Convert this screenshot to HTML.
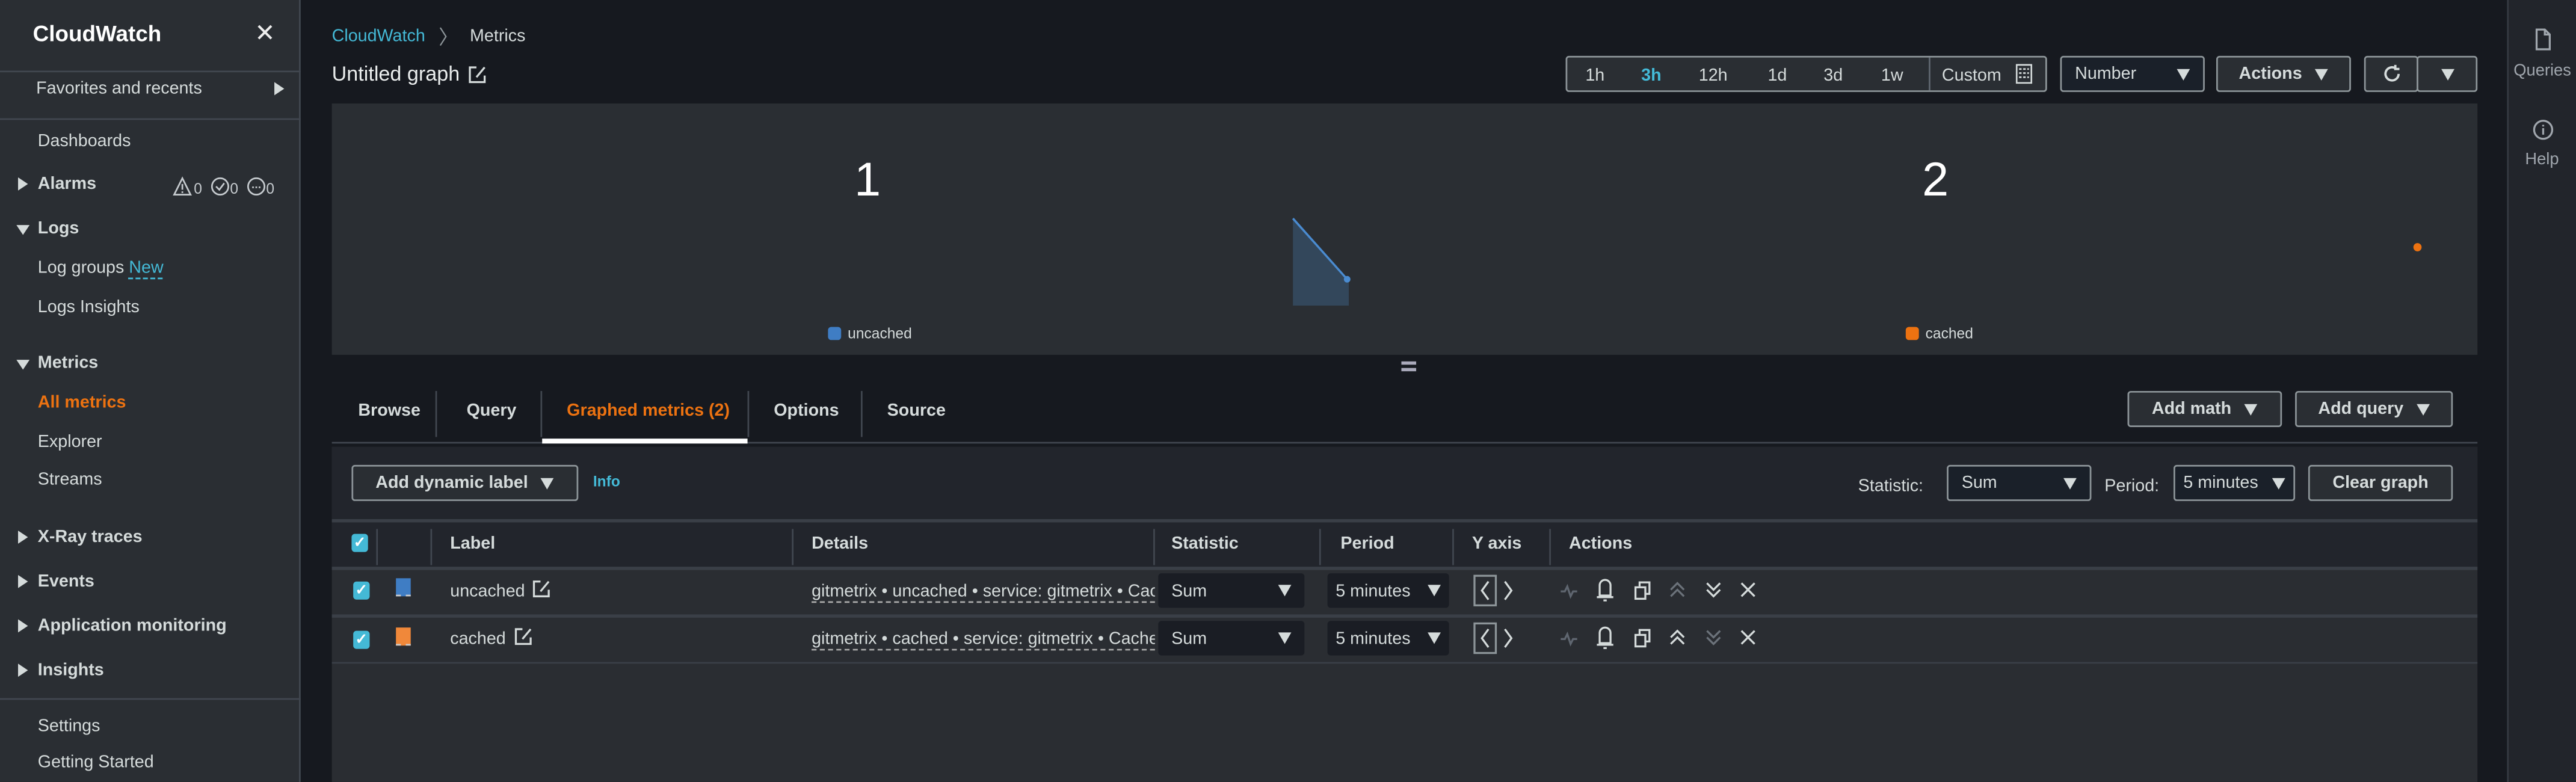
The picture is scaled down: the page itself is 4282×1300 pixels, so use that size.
<!DOCTYPE html>
<html><head><meta charset="utf-8"><style>
*{margin:0;padding:0;box-sizing:border-box}
html,body{width:4282px;height:1300px;overflow:hidden;background:#16191f}
#w{position:absolute;left:0;top:0;width:1568px;height:476px;transform:scale(2.7309);transform-origin:0 0;font-family:"Liberation Sans",sans-serif;font-size:10.5px;color:#d5dbdb;background:#16191f}
.a{position:absolute;white-space:nowrap}
.b{font-weight:bold}
.btn{position:absolute;border:1px solid #8d9599;border-radius:2px;background:#2a2e33;color:#d5dbdb;font-weight:bold;display:flex;align-items:center;justify-content:center;gap:8px}
.sel{position:absolute;border:1px solid #8d9599;border-radius:2px;background:#1a2029;color:#d5dbdb;display:flex;align-items:center;justify-content:space-between;padding:0 8px}
.tri{display:inline-block;width:0;height:0;border-left:4px solid transparent;border-right:4px solid transparent;border-top:7px solid #d5dbdb}
.rtri{position:absolute;width:0;height:0;border-top:4.5px solid transparent;border-bottom:4.5px solid transparent;border-left:6px solid #d5dbdb}
.dtri{position:absolute;width:0;height:0;border-left:4.5px solid transparent;border-right:4.5px solid transparent;border-top:6px solid #d5dbdb}
.vs{position:absolute;width:1px;background:#414750}
.hl{position:absolute;height:1px;background:#414750}
.cb{position:absolute;width:10px;height:11px;background:#44b9d6;border-radius:2px;color:#fff;font-size:9px;line-height:11px;text-align:center;font-weight:bold}
.isel{position:absolute;background:#1a1d24;border-radius:2px;display:flex;align-items:center;justify-content:space-between;padding:0 8px;color:#d5dbdb}
</style></head><body><div id="w">
<!-- sidebar -->
<div class="a" style="left:0;top:0;width:183px;height:476px;background:#2a2e33;border-right:1px solid #414750"></div>
<div class="a b" style="left:20px;top:13px;font-size:13.5px;color:#fff">CloudWatch</div>
<div class="a" style="left:155px;top:11px;font-size:15px;color:#eee">✕</div>
<div class="hl" style="left:0;top:43px;width:183px;background:#414750"></div>
<div class="a" style="left:22px;top:48px">Favorites and recents</div>
<div class="rtri" style="left:167px;top:50px"></div>
<div class="hl" style="left:0;top:72px;width:183px"></div>
<div class="a" style="left:23px;top:80px">Dashboards</div>
<div class="rtri" style="left:11px;top:108px"></div>
<div class="a b" style="left:23px;top:106px">Alarms</div>
<svg class="a" style="left:105px;top:107px" width="72" height="13" viewBox="0 0 72 13" fill="none" stroke="#c6cbcf" stroke-width="1"><path d="M6 1.5L1 11.5h10z M6 5v3.5 M6 9.5v1"/><text x="13" y="11" font-size="9" fill="#c6cbcf" stroke="none" font-family="Liberation Sans">0</text><circle cx="29" cy="6.5" r="5"/><path d="M26.5 6.5l2 2 3-4"/><text x="35" y="11" font-size="9" fill="#c6cbcf" stroke="none" font-family="Liberation Sans">0</text><circle cx="51" cy="6.5" r="5"/><path d="M48.5 7h1M50.5 7h1M52.5 7h1"/><text x="57" y="11" font-size="9" fill="#c6cbcf" stroke="none" font-family="Liberation Sans">0</text></svg>
<div class="dtri" style="left:10px;top:137px"></div>
<div class="a b" style="left:23px;top:133px">Logs</div>
<div class="a" style="left:23px;top:157px">Log groups <span style="color:#44b9d6;border-bottom:1px dashed #44b9d6">New</span></div>
<div class="a" style="left:23px;top:181px">Logs Insights</div>
<div class="dtri" style="left:10px;top:219px"></div>
<div class="a b" style="left:23px;top:215px">Metrics</div>
<div class="a b" style="left:23px;top:239px;color:#ec7211">All metrics</div>
<div class="a" style="left:23px;top:263px">Explorer</div>
<div class="a" style="left:23px;top:286px">Streams</div>
<div class="rtri" style="left:11px;top:323px"></div><div class="a b" style="left:23px;top:321px">X-Ray traces</div>
<div class="rtri" style="left:11px;top:350px"></div><div class="a b" style="left:23px;top:348px">Events</div>
<div class="rtri" style="left:11px;top:377px"></div><div class="a b" style="left:23px;top:375px">Application monitoring</div>
<div class="rtri" style="left:11px;top:404px"></div><div class="a b" style="left:23px;top:402px">Insights</div>
<div class="hl" style="left:0;top:425px;width:183px"></div>
<div class="a" style="left:23px;top:436px">Settings</div>
<div class="a" style="left:23px;top:458px">Getting Started</div>
<!-- right panel -->
<div class="a" style="left:1526px;top:0;width:42px;height:476px;background:#22252b;border-left:1px solid #353a42"></div>
<svg class="a" style="left:1542px;top:17px" width="12" height="14" viewBox="0 0 12 14" fill="none" stroke="#a0a6ad" stroke-width="1.2"><path d="M2 1h5l3 3v9H2z M7 1v3h3"/></svg>
<div class="a" style="left:1530px;top:38px;color:#a0a6ad;font-size:10px">Queries</div>
<svg class="a" style="left:1541px;top:72px" width="14" height="14" viewBox="0 0 14 14" fill="none" stroke="#a0a6ad" stroke-width="1.2"><circle cx="7" cy="7" r="5.5"/><path d="M7 6v4M7 4v1"/></svg>
<div class="a" style="left:1537px;top:92px;color:#a0a6ad;font-size:10px">Help</div>
<!-- header -->
<div class="a" style="left:202px;top:16px;color:#44b9d6">CloudWatch</div>
<div class="a" style="left:267px;top:14px;color:#8d9599;font-size:12px">〉</div>
<div class="a" style="left:286px;top:16px">Metrics</div>
<div class="a" style="left:202px;top:38px;font-size:12.5px;color:#eaeded">Untitled graph</div>
<svg class="a" style="left:285px;top:40px" width="11" height="11" viewBox="0 0 11 11" fill="none" stroke="#d5dbdb" stroke-width="1.2"><path d="M5 1H1v9h9V6 M5 7l5-6"/></svg>
<!-- time group -->
<div class="a" style="left:953px;top:34px;width:293px;height:22px;border:1px solid #8d9599;border-radius:2px;background:#2a2e33"></div>
<div class="a" style="left:965px;top:40px">1h</div>
<div class="a b" style="left:999px;top:40px;color:#44b9d6">3h</div>
<div class="a" style="left:1034px;top:40px">12h</div>
<div class="a" style="left:1076px;top:40px">1d</div>
<div class="a" style="left:1110px;top:40px">3d</div>
<div class="a" style="left:1145px;top:40px">1w</div>
<div class="vs" style="left:1174px;top:35px;height:20px;background:#5f6670"></div>
<div class="a" style="left:1182px;top:40px">Custom</div>
<svg class="a" style="left:1227px;top:39px" width="10" height="12" viewBox="0 0 10 12"><rect x="0.5" y="0.5" width="9" height="11" fill="none" stroke="#d5dbdb"/><path d="M2 3h6M2 5.5h6M2 8h6" stroke="#d5dbdb" stroke-dasharray="1.5 1"/></svg>
<div class="sel" style="left:1254px;top:34px;width:88px;height:22px"><span>Number</span><span class="tri"></span></div>
<div class="btn" style="left:1349px;top:34px;width:82px;height:22px">Actions <span class="tri"></span></div>
<div class="btn" style="left:1439px;top:34px;width:33px;height:22px"><svg width="12" height="12" viewBox="0 0 12 12" fill="none" stroke="#d5dbdb" stroke-width="1.4"><path d="M10 6a4 4 0 1 1-2-3.5M8 0.5v2.5h2.5"/></svg></div>
<div class="btn" style="left:1471px;top:34px;width:37px;height:22px"><span class="tri"></span></div>
<!-- graph -->
<div class="a" style="left:202px;top:63px;width:1306px;height:153px;background:#2a2e33"></div>
<div class="a" style="left:520px;top:94px;font-size:29px;color:#fff">1</div>
<div class="a" style="left:1170px;top:94px;font-size:29px;color:#fff">2</div>
<svg class="a" style="left:780px;top:128px" width="50" height="62"><path d="M7 5L41 43V58H7z" fill="#33475b"/><path d="M7 5L40 42" stroke="#4a8bd0" stroke-width="1.3"/><circle cx="40" cy="42" r="2" fill="#4a8bd0"/></svg>
<div class="a" style="left:1469px;top:148px;width:5px;height:5px;border-radius:3px;background:#ec7211"></div>
<div class="a" style="left:504px;top:199px;width:8px;height:8px;border-radius:2px;background:#3f7dc4"></div>
<div class="a" style="left:516px;top:198px;font-size:9px">uncached</div>
<div class="a" style="left:1160px;top:199px;width:8px;height:8px;border-radius:2px;background:#ec7211"></div>
<div class="a" style="left:1172px;top:198px;font-size:9px">cached</div>
<div class="a" style="left:853px;top:220px;width:9px;height:2px;background:#aab"></div>
<div class="a" style="left:853px;top:224px;width:9px;height:2px;background:#aab"></div>
<!-- tabs -->
<div class="a b" style="left:218px;top:244px">Browse</div>
<div class="vs" style="left:265px;top:238px;height:28px"></div>
<div class="a b" style="left:284px;top:244px">Query</div>
<div class="vs" style="left:329px;top:238px;height:28px"></div>
<div class="a b" style="left:345px;top:244px;color:#ec7211">Graphed metrics (2)</div>
<div class="vs" style="left:455px;top:238px;height:28px"></div>
<div class="a b" style="left:471px;top:244px">Options</div>
<div class="vs" style="left:524px;top:238px;height:28px"></div>
<div class="a b" style="left:540px;top:244px">Source</div>
<div class="btn" style="left:1295px;top:238px;width:94px;height:22px">Add math <span class="tri"></span></div>
<div class="btn" style="left:1397px;top:238px;width:96px;height:22px">Add query <span class="tri"></span></div>
<div class="hl" style="left:202px;top:269px;width:1306px;background:#414750"></div>
<div class="a" style="left:330px;top:267px;width:125px;height:3px;background:#fff"></div>
<!-- lower panel -->
<div class="a" style="left:202px;top:272px;width:1306px;height:204px;background:#2a2d32"></div>
<div class="a" style="left:202px;top:272px;width:1306px;height:73px;background:#22252c"></div>
<div class="btn" style="left:214px;top:283px;width:138px;height:22px">Add dynamic label <span class="tri"></span></div>
<div class="a b" style="left:361px;top:288px;color:#44b9d6;font-size:9px">Info</div>
<div class="a" style="left:1131px;top:290px">Statistic:</div>
<div class="sel" style="left:1185px;top:283px;width:88px;height:22px"><span>Sum</span><span class="tri"></span></div>
<div class="a" style="left:1281px;top:290px">Period:</div>
<div class="sel" style="left:1323px;top:283px;width:74px;height:22px;padding:0 5px"><span>5 minutes</span><span class="tri"></span></div>
<div class="btn" style="left:1405px;top:283px;width:88px;height:22px">Clear graph</div>
<div class="hl" style="left:202px;top:316px;width:1306px;height:1.5px;background:#3a3f47"></div>
<div class="cb" style="left:214px;top:325px">✓</div>
<div class="vs" style="left:229px;top:322px;height:22px"></div>
<div class="vs" style="left:262px;top:322px;height:22px"></div>
<div class="a b" style="left:274px;top:325px">Label</div>
<div class="vs" style="left:482px;top:322px;height:22px"></div>
<div class="a b" style="left:494px;top:325px">Details</div>
<div class="vs" style="left:702px;top:322px;height:22px"></div>
<div class="a b" style="left:713px;top:325px">Statistic</div>
<div class="vs" style="left:803px;top:322px;height:22px"></div>
<div class="a b" style="left:816px;top:325px">Period</div>
<div class="vs" style="left:884px;top:322px;height:22px"></div>
<div class="a b" style="left:896px;top:325px">Y axis</div>
<div class="vs" style="left:943px;top:322px;height:22px"></div>
<div class="a b" style="left:955px;top:325px">Actions</div>
<div class="hl" style="left:202px;top:345px;width:1306px;height:1.5px;background:#3a3f47"></div>
<div class="hl" style="left:202px;top:374px;width:1306px;height:1.5px;background:#3a3f47"></div>
<div class="hl" style="left:202px;top:403px;width:1306px;height:1px;background:#3a3f47"></div>
<!-- row 1 -->
<div class="cb" style="left:215px;top:354px">✓</div>
<div class="a" style="left:241px;top:352px;width:9px;height:11px;background:#3f7dc4;border-bottom:1px dashed #ccc"></div>
<div class="a" style="left:274px;top:354px">uncached</div>
<svg class="a" style="left:324px;top:353px" width="11" height="11" viewBox="0 0 11 11" fill="none" stroke="#d5dbdb" stroke-width="1.2"><path d="M5 1H1v9h9V6 M5 7l5-6"/></svg>
<div class="a" style="left:494px;top:354px;width:209px;overflow:hidden;border-bottom:1px dashed #aaa">gitmetrix • uncached • service: gitmetrix • CacheHits</div>
<div class="isel" style="left:705px;top:349px;width:89px;height:21px"><span>Sum</span><span class="tri"></span></div>
<div class="isel" style="left:808px;top:349px;width:74px;height:21px;padding:0 5px"><span>5 minutes</span><span class="tri"></span></div>
<!-- row 2 -->
<div class="cb" style="left:215px;top:384px">✓</div>
<div class="a" style="left:241px;top:382px;width:9px;height:11px;background:#f0883a;border-bottom:1px dashed #ccc"></div>
<div class="a" style="left:274px;top:383px">cached</div>
<svg class="a" style="left:313px;top:382px" width="11" height="11" viewBox="0 0 11 11" fill="none" stroke="#d5dbdb" stroke-width="1.2"><path d="M5 1H1v9h9V6 M5 7l5-6"/></svg>
<div class="a" style="left:494px;top:383px;width:209px;overflow:hidden;border-bottom:1px dashed #aaa">gitmetrix • cached • service: gitmetrix • CacheHits</div>
<div class="isel" style="left:705px;top:378px;width:89px;height:21px"><span>Sum</span><span class="tri"></span></div>
<div class="isel" style="left:808px;top:378px;width:74px;height:21px;padding:0 5px"><span>5 minutes</span><span class="tri"></span></div>
<!-- y axis + actions icons: row1 center y=10, row2 center y=39 (svg top 349) -->
<svg class="a" style="left:896px;top:349px" width="180" height="50" viewBox="0 0 180 50" fill="none" stroke-width="1.2">
<g stroke="#8d9599"><rect x="1.5" y="1.5" width="13" height="18"/><rect x="1.5" y="30.5" width="13" height="18"/></g>
<g stroke="#d5dbdb"><path d="M10 5l-4 5.5 4 5.5M20 5l4 5.5-4 5.5M10 34l-4 5.5 4 5.5M20 34l4 5.5-4 5.5"/></g>
<g stroke="#5f6670"><path d="M54 11h2.5l1.5-3 2 6 1.5-3h2.5M54 40h2.5l1.5-3 2 6 1.5-3h2.5"/></g>
<g stroke="#d5dbdb">
<path d="M76 14.5h10M81 4a3.3 3.3 0 0 0-3.3 3.3V13.5h6.6V7.3A3.3 3.3 0 0 0 81 4M80 16.5h2"/>
<path d="M76 43.5h10M81 33a3.3 3.3 0 0 0-3.3 3.3V42.5h6.6V36.3A3.3 3.3 0 0 0 81 33M80 45.5h2"/>
<rect x="99.5" y="8.5" width="6" height="7"/><path d="M102 8V5.5h6v7h-2.5"/>
<rect x="99.5" y="37.5" width="6" height="7"/><path d="M102 37v-2.5h6v7h-2.5"/>
<path d="M164 6l8 8M172 6l-8 8M164 35l8 8M172 35l-8 8"/>
</g>
<path d="M121 10l4-4 4 4M121 14l4-4 4 4" stroke="#6b727a"/>
<path d="M121 39l4-4 4 4M121 43l4-4 4 4" stroke="#d5dbdb"/>
<path d="M143 6l4 4 4-4M143 10l4 4 4-4" stroke="#d5dbdb"/>
<path d="M143 35l4 4 4-4M143 39l4 4 4-4" stroke="#6b727a"/>
</svg>
</div></body></html>
